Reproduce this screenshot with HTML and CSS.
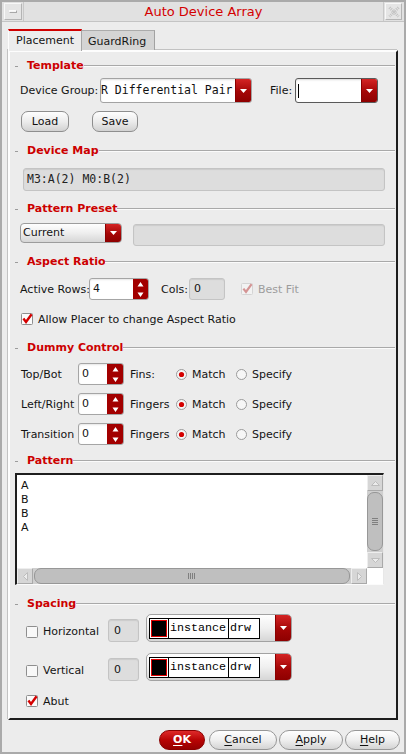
FILE: index.html
```html
<!DOCTYPE html>
<html lang="en">
<head>
<meta charset="utf-8">
<title>Auto Device Array</title>
<link rel="stylesheet" href="styles.css">
</head>
<body>
<div class="window">
  <div class="titlebar">
    <div class="tbtn tbtn-min"><span class="minbar"></span></div>
    <div class="title">Auto Device Array</div>
    <div class="tbtn tbtn-close">
      <svg width="12" height="12" viewBox="0 0 12 12"><path d="M1.5 1.5 L10.5 10.5 M10.5 1.5 L1.5 10.5" stroke="#c2c2c2" stroke-width="3" stroke-dasharray="1 1" fill="none"/></svg>
    </div>
  </div>
  <div class="client">
    <div class="tabs">
      <div class="tab tab-on">Placement</div>
      <div class="tab tab-off">GuardRing</div>
    </div>
    <div class="panel">
      <div class="sec-head"><span class="dash"></span><span class="sec-title">Template</span><span class="rule"></span></div>
      <div class="row row-dg">
        <span class="lbl w-dg">Device Group:</span>
        <div class="combo combo-dg"><span class="combo-val mono">R Differential Pair</span><span class="dd"><svg width="7" height="4" viewBox="0 0 7 4"><path d="M0 0H7L3.5 4Z" fill="#fff"/></svg></span></div>
        <span class="lbl w-file">File:</span>
        <div class="combo combo-file"><span class="caret"></span><span class="dd"><svg width="7" height="4" viewBox="0 0 7 4"><path d="M0 0H7L3.5 4Z" fill="#fff"/></svg></span></div>
      </div>
      <div class="row row-load">
        <button class="btn btn-load">Load</button>
        <button class="btn btn-save">Save</button>
      </div>

      <div class="sec-head sh-map"><span class="dash"></span><span class="sec-title">Device Map</span><span class="rule"></span></div>
      <div class="field field-map mono">M3:A(2) M0:B(2)</div>

      <div class="sec-head sh-preset"><span class="dash"></span><span class="sec-title">Pattern Preset</span><span class="rule"></span></div>
      <div class="row row-preset">
        <div class="combo combo-cur"><span class="combo-txt">Current</span><span class="dd"><svg width="7" height="4" viewBox="0 0 7 4"><path d="M0 0H7L3.5 4Z" fill="#fff"/></svg></span></div>
        <div class="field field-preset"></div>
      </div>

      <div class="sec-head sh-aspect"><span class="dash"></span><span class="sec-title">Aspect Ratio</span><span class="rule"></span></div>
      <div class="row row-ar">
        <span class="lbl w-rows">Active Rows:</span>
        <div class="spin spin-rows"><span class="spin-val">4</span><span class="spin-btn"><svg width="9" height="22" viewBox="0 0 9 22"><path d="M1.5 8.5 L4.5 4 L7.5 8.5Z M1.5 14.5 L4.5 19 L7.5 14.5Z" fill="#fff"/></svg></span></div>
        <span class="lbl w-cols">Cols:</span>
        <div class="field field-cols">0</div>
        <svg class="cb cb-best" width="12" height="12" viewBox="0 0 12 12"><rect x="0.5" y="0.5" width="11" height="11" rx="1" fill="#f2f2f2" stroke="#d4d4d4"/><path d="M2.4 5.6 L5 9 L10.6 1.2" stroke="#d49494" stroke-width="2.2" fill="none"/></svg>
        <span class="lbl lbl-dis">Best Fit</span>
      </div>
      <div class="row row-allow">
        <svg class="cb" width="12" height="12" viewBox="0 0 12 12"><rect x="0.5" y="0.5" width="11" height="11" rx="1" fill="#fbfbfb" stroke="#8e8e8e"/><path d="M2.4 5.6 L5 9 L10.6 1.2" stroke="#d40000" stroke-width="2.4" fill="none"/></svg>
        <span class="lbl cb-lbl">Allow Placer to change Aspect Ratio</span>
      </div>

      <div class="sec-head sh-dummy"><span class="dash"></span><span class="sec-title">Dummy Control</span><span class="rule"></span></div>
      <div class="row row-dummy">
        <span class="lbl w-dl">Top/Bot</span>
        <div class="spin spin-d"><span class="spin-val">0</span><span class="spin-btn"><svg width="9" height="22" viewBox="0 0 9 22"><path d="M1.5 8.5 L4.5 4 L7.5 8.5Z M1.5 14.5 L4.5 19 L7.5 14.5Z" fill="#fff"/></svg></span></div>
        <span class="lbl w-unit">Fins:</span>
        <svg class="radio" width="11" height="11" viewBox="0 0 11 11"><circle cx="5.5" cy="5.5" r="5" fill="#f6f6f6" stroke="#9a9a9a"/><circle cx="5.5" cy="5.5" r="2.6" fill="#d40000"/></svg>
        <span class="lbl w-match">Match</span>
        <svg class="radio" width="11" height="11" viewBox="0 0 11 11"><circle cx="5.5" cy="5.5" r="5" fill="#f6f6f6" stroke="#9a9a9a"/></svg>
        <span class="lbl w-spec">Specify</span>
      </div>
      <div class="row row-dummy">
        <span class="lbl w-dl">Left/Right</span>
        <div class="spin spin-d"><span class="spin-val">0</span><span class="spin-btn"><svg width="9" height="22" viewBox="0 0 9 22"><path d="M1.5 8.5 L4.5 4 L7.5 8.5Z M1.5 14.5 L4.5 19 L7.5 14.5Z" fill="#fff"/></svg></span></div>
        <span class="lbl w-unit">Fingers</span>
        <svg class="radio" width="11" height="11" viewBox="0 0 11 11"><circle cx="5.5" cy="5.5" r="5" fill="#f6f6f6" stroke="#9a9a9a"/><circle cx="5.5" cy="5.5" r="2.6" fill="#d40000"/></svg>
        <span class="lbl w-match">Match</span>
        <svg class="radio" width="11" height="11" viewBox="0 0 11 11"><circle cx="5.5" cy="5.5" r="5" fill="#f6f6f6" stroke="#9a9a9a"/></svg>
        <span class="lbl w-spec">Specify</span>
      </div>
      <div class="row row-dummy">
        <span class="lbl w-dl">Transition</span>
        <div class="spin spin-d"><span class="spin-val">0</span><span class="spin-btn"><svg width="9" height="22" viewBox="0 0 9 22"><path d="M1.5 8.5 L4.5 4 L7.5 8.5Z M1.5 14.5 L4.5 19 L7.5 14.5Z" fill="#fff"/></svg></span></div>
        <span class="lbl w-unit">Fingers</span>
        <svg class="radio" width="11" height="11" viewBox="0 0 11 11"><circle cx="5.5" cy="5.5" r="5" fill="#f6f6f6" stroke="#9a9a9a"/><circle cx="5.5" cy="5.5" r="2.6" fill="#d40000"/></svg>
        <span class="lbl w-match">Match</span>
        <svg class="radio" width="11" height="11" viewBox="0 0 11 11"><circle cx="5.5" cy="5.5" r="5" fill="#f6f6f6" stroke="#9a9a9a"/></svg>
        <span class="lbl w-spec">Specify</span>
      </div>

      <div class="sec-head sh-pattern"><span class="dash"></span><span class="sec-title">Pattern</span><span class="rule"></span></div>
      <div class="ta">
        <div class="ta-text">A<br>B<br>B<br>A</div>
        <div class="vscroll">
          <div class="sbtn"><svg width="9" height="5" viewBox="0 0 9 5"><path d="M0.5 4.5 L4.5 0.5 L8.5 4.5Z" fill="#ececec" stroke="#bdbdbd"/></svg></div>
          <div class="thumb thumb-v"><span class="grip-v"></span></div>
          <div class="sbtn"><svg width="9" height="5" viewBox="0 0 9 5"><path d="M0.5 0.5 L4.5 4.5 L8.5 0.5Z" fill="#ececec" stroke="#bdbdbd"/></svg></div>
        </div>
        <div class="hscroll">
          <div class="sbtn"><svg width="5" height="9" viewBox="0 0 5 9"><path d="M4.5 0.5 L0.5 4.5 L4.5 8.5Z" fill="#ececec" stroke="#bdbdbd"/></svg></div>
          <div class="thumb thumb-h"><span class="grip-h"></span></div>
          <div class="sbtn"><svg width="5" height="9" viewBox="0 0 5 9"><path d="M0.5 0.5 L4.5 4.5 L0.5 8.5Z" fill="#ececec" stroke="#bdbdbd"/></svg></div>
        </div>
        <div class="corner"></div>
      </div>

      <div class="sec-head sh-spacing"><span class="dash"></span><span class="sec-title">Spacing</span><span class="rule"></span></div>
      <div class="row row-sp">
        <div class="cbwrap">
          <svg class="cb" width="12" height="12" viewBox="0 0 12 12"><rect x="0.5" y="0.5" width="11" height="11" rx="1" fill="#f8f8f8" stroke="#8e8e8e"/></svg>
          <span class="lbl cb-lbl w-sp">Horizontal</span>
        </div>
        <div class="field field-sp">0</div>
        <div class="combo combo-lpp">
          <div class="lpp">
            <span class="swatch"><span class="swatch-in"></span></span>
            <span class="lpp-cell lpp-name">instance</span>
            <span class="lpp-cell lpp-purp">drw</span>
          </div>
          <span class="dd"><svg width="7" height="4" viewBox="0 0 7 4"><path d="M0 0H7L3.5 4Z" fill="#fff"/></svg></span>
        </div>
      </div>
      <div class="row row-sp row-sp2">
        <div class="cbwrap">
          <svg class="cb" width="12" height="12" viewBox="0 0 12 12"><rect x="0.5" y="0.5" width="11" height="11" rx="1" fill="#f8f8f8" stroke="#8e8e8e"/></svg>
          <span class="lbl cb-lbl w-sp">Vertical</span>
        </div>
        <div class="field field-sp">0</div>
        <div class="combo combo-lpp">
          <div class="lpp">
            <span class="swatch"><span class="swatch-in"></span></span>
            <span class="lpp-cell lpp-name">instance</span>
            <span class="lpp-cell lpp-purp">drw</span>
          </div>
          <span class="dd"><svg width="7" height="4" viewBox="0 0 7 4"><path d="M0 0H7L3.5 4Z" fill="#fff"/></svg></span>
        </div>
      </div>
      <div class="row row-abut">
        <svg class="cb" width="12" height="12" viewBox="0 0 12 12"><rect x="0.5" y="0.5" width="11" height="11" rx="1" fill="#fbfbfb" stroke="#8e8e8e"/><path d="M2.4 5.6 L5 9 L10.6 1.2" stroke="#d40000" stroke-width="2.4" fill="none"/></svg>
        <span class="lbl cb-lbl">Abut</span>
      </div>
    </div>
    <div class="actions">
      <button class="pbtn pbtn-ok"><u>O</u>K</button>
      <button class="pbtn pbtn-cancel"><u>C</u>ancel</button>
      <button class="pbtn pbtn-apply"><u>A</u>pply</button>
      <button class="pbtn pbtn-help"><u>H</u>elp</button>
    </div>
  </div>
</div>
</body>
</html>
```

FILE: styles.css
```css
*{box-sizing:border-box;margin:0;padding:0}
html,body{width:406px;height:754px;overflow:hidden;background:#ececec}
body{font-family:"DejaVu Sans","Liberation Sans",sans-serif;font-size:11px;line-height:13px;color:#141414}
button{font:inherit;color:inherit;background:none;border:none;cursor:default}
u{text-decoration:underline;text-underline-offset:2px}
.mono{font-family:"DejaVu Sans Mono","Liberation Mono",monospace;font-size:11.5px}

.window{width:406px;height:754px;border:2px solid #aaaaaa;background:#ececec;display:flex;flex-direction:column}

/* title bar */
.titlebar{height:20px;flex:none;display:flex;align-items:stretch;background:#e1e1e1;border-bottom:1px solid #c4c4c4}
.tbtn{flex:none;display:flex;align-items:center;justify-content:center;background:#e5e5e5;border:1px solid;border-color:#f8f8f8 #b4b4b4 #b4b4b4 #f8f8f8;margin-top:1px;margin-bottom:1px}
.tbtn-min{width:18px;margin-left:2px}
.tbtn-close{width:17px;margin-right:2px}
.minbar{display:block;width:8px;height:3px;background:#f4f4f4;border:1px solid;border-color:#fafafa #a8a8a8 #a8a8a8 #fafafa}
.title{flex:1;text-align:center;color:#d40000;font-size:13px;line-height:19px;border-left:1px solid #c8c8c8;border-right:1px solid #c8c8c8;margin:0 1px}

/* client */
.client{flex:1;display:flex;flex-direction:column}
.tabs{display:flex;align-items:flex-end;height:21px;margin:7px 0 0 6px;position:relative;z-index:1}
.tab{font-size:11px;line-height:19px}
.tab-on{width:74px;height:22px;margin-bottom:-1px;padding-left:7px;background:#ececec;border-top:2px solid #d00000;border-left:1px solid #fdfdfd;border-right:1px solid #a6a6a6}
.tab-off{width:73px;height:20px;padding:1px 0 0 6px;background:#d4d4d4;border-top:1px solid #ababab;border-right:1px solid #a2a2a2}

.panel{width:390px;height:670px;margin-left:6px;border:2px solid;border-color:#fdfdfd #1c1c1c #1c1c1c #fdfdfd;box-shadow:-1px -1px 0 #c2c2c2;display:flex;flex-direction:column}

/* section header */
.sec-head{height:14px;flex:none;display:flex;align-items:center;margin-top:7px}
.dash{width:3px;height:1px;background:#9c9c9c;margin-left:5px;margin-right:9px;flex:none}
.sec-title{color:#cc0000;font-weight:bold;font-size:11px;line-height:14px;flex:none}
.rule{flex:1;height:2px;border-top:1px solid #a9a9a9;border-bottom:1px solid #fbfbfb;margin-right:1px}
.sh-map{margin-top:12px}
.sh-preset{margin-top:11px}
.sh-aspect{margin-top:9px}
.sh-dummy{margin-top:15px}
.sh-pattern{margin-top:9px}
.sh-spacing{margin-top:12px}

.row{display:flex;align-items:center;flex:none}
.lbl{flex:none;white-space:nowrap}

/* template */
.row-dg{height:25px;margin-top:5px;padding-left:10px}
.w-dg{width:80px}
.w-file{width:25px;margin-left:18px}
.combo{display:flex;align-items:stretch;border:1px solid #a3a3a3;border-radius:3px;overflow:hidden;flex:none}
.combo-dg{width:152px;height:25px;background:#fff;box-shadow:inset 0 1px 2px rgba(0,0,0,.12)}
.combo-val{flex:1;display:flex;align-items:center;white-space:nowrap;overflow:hidden;color:#111}
.combo-file{width:83px;height:25px;background:#fff;border-color:#5a5a5a;box-shadow:inset 0 1px 2px rgba(0,0,0,.15)}
.caret{width:1px;height:14px;background:#000;align-self:center;margin-left:2px}
.dd{width:16px;flex:none;margin-left:auto;display:flex;align-items:center;justify-content:center;background:linear-gradient(#d42424,#a40606 55%,#8e0000);border-left:1px solid #8a0000}

.row-load{height:21px;margin-top:8px;padding-left:11px}
.btn{height:21px;border:1px solid #8e8e8e;border-radius:7px;background:linear-gradient(#fefefe,#ececec 50%,#d2d2d2);text-align:center;font-size:11px;line-height:19px;color:#111}
.btn-load{width:48px}
.btn-save{width:46px;margin-left:23px}

.field{background:#dddddd;border:1px solid #c4c4c4;border-radius:3px;box-shadow:inset 0 1px 1px rgba(0,0,0,.08);flex:none}
.field-map{width:362px;height:23px;margin:10px 0 0 13px;padding-left:3px;line-height:21px;color:#222}

/* preset */
.row-preset{height:23px;margin-top:7px;padding-left:10px;align-items:flex-start}
.combo-cur{width:102px;height:20px;background:linear-gradient(#fefefe,#eeeeee 50%,#d6d6d6);border-color:#9c9c9c;border-radius:4px}
.combo-txt{flex:1;padding-left:2px;line-height:18px}
.field-preset{width:252px;height:22px;margin-left:11px;margin-top:1px}

/* aspect */
.row-ar{height:22px;margin-top:9px;padding-left:10px}
.w-rows{width:69px}
.spin{display:flex;align-items:stretch;height:22px;background:#fff;border:1px solid #a5a5a5;border-radius:3px;overflow:hidden;flex:none;box-shadow:inset 0 1px 2px rgba(0,0,0,.1)}
.spin-val{flex:1;padding-left:3px;line-height:20px}
.spin-btn{width:15px;flex:none;background:#a20000;display:flex;align-items:center;justify-content:center}
.spin-btn svg{margin-top:-1px}
.spin-rows{width:60px}
.w-cols{width:28px;margin-left:12px}
.field-cols{width:36px;height:22px;padding-left:4px;line-height:20px}
.cb{flex:none;display:block}
.cb-best{margin-left:16px}
.lbl-dis{margin-left:5px;color:#9c9c9c}

.row-allow{height:14px;margin-top:12px;padding-left:11px}
.cb-lbl{margin-left:5px}

/* dummy */
.row-dummy{height:22px;margin-top:8px;padding-left:11px}
.w-dl{width:57px}
.spin-d{width:46px}
.spin-d .spin-btn{width:16px}
.w-unit{width:46px;margin-left:6px}
.radio{flex:none;display:block}
.w-match{width:44px;margin-left:5px}
.w-spec{margin-left:5px}

/* pattern text area */
.ta{width:369px;height:112px;margin:5px 0 0 5px;flex:none;display:grid;grid-template-columns:350px 16px;grid-template-rows:93px 16px;border-style:solid;border-width:2px 1px 1px 2px;border-color:#1e1e1e #e8e8e8 #fbfbfb #1e1e1e;background:#fff}
.ta-text{padding:4px 4px;line-height:14px;color:#111}
.vscroll{display:flex;flex-direction:column;background:#cfcfcf}
.hscroll{display:flex;background:#cfcfcf}
.corner{background:#fff}
.sbtn{width:16px;height:16px;flex:none;display:flex;align-items:center;justify-content:center;background:#d6d6d6;border:1px solid;border-color:#eeeeee #a9a9a9 #a9a9a9 #eeeeee}
.thumb{flex:1;background:#bfbfbf;border:1px solid #979797;display:flex;align-items:center;justify-content:center}
.thumb-v{border-radius:7px;margin:1px 0}
.thumb-h{border-radius:7px;margin:0 1px}
.grip-v{width:6px;height:8px;background:repeating-linear-gradient(#7f7f7f 0 1px,transparent 1px 2px)}
.grip-h{width:8px;height:6px;background:repeating-linear-gradient(90deg,#7f7f7f 0 1px,transparent 1px 2px)}

/* spacing */
.row-sp{height:28px;margin-top:3px;padding-left:16px;align-items:flex-end}
.row-sp2{margin-top:11px}
.cbwrap{display:flex;align-items:center;height:13px;margin-bottom:4px;flex:none}
.w-sp{width:65px}
.field-sp{width:31px;height:23px;padding-left:5px;line-height:21px}
.combo-lpp{width:146px;height:28px;margin-left:7px;border-radius:5px;border-color:#a2a2a2;background:linear-gradient(#fefefe,#f0f0f0 50%,#d6d6d6);align-items:center}
.lpp{display:flex;height:21px;margin-left:2px;border:1px solid #000;background:#fff}
.swatch{width:18px;padding:1px;display:flex}
.swatch-in{flex:1;background:#000;border:1px solid #e00000}
.lpp-cell{border-left:1px solid #000;font-family:"Liberation Mono","Courier New",monospace;font-size:11.7px;line-height:19px;color:#000;padding-left:1px}
.lpp-name{width:60px}
.lpp-purp{width:31px}
.combo-lpp .dd{align-self:stretch}

.row-abut{height:12px;margin-top:14px;padding-left:16px}

/* bottom buttons */
.actions{display:flex;justify-content:flex-end;height:20px;margin-top:10px;padding-right:4px}
.pbtn{height:20px;border-radius:10px;border:1px solid #979797;background:linear-gradient(#fefefe,#efefef 50%,#d4d4d4);font-size:11px;line-height:18px;text-align:center;color:#111}
.pbtn-ok{width:46px;margin-right:4px;background:linear-gradient(#de2a2a,#b80404 50%,#950000);border-color:#8a0000;color:#fff;font-weight:bold}
.pbtn-cancel{width:68px;margin-right:2px}
.pbtn-apply{width:64px;margin-right:2px}
.pbtn-help{width:55px}
```
